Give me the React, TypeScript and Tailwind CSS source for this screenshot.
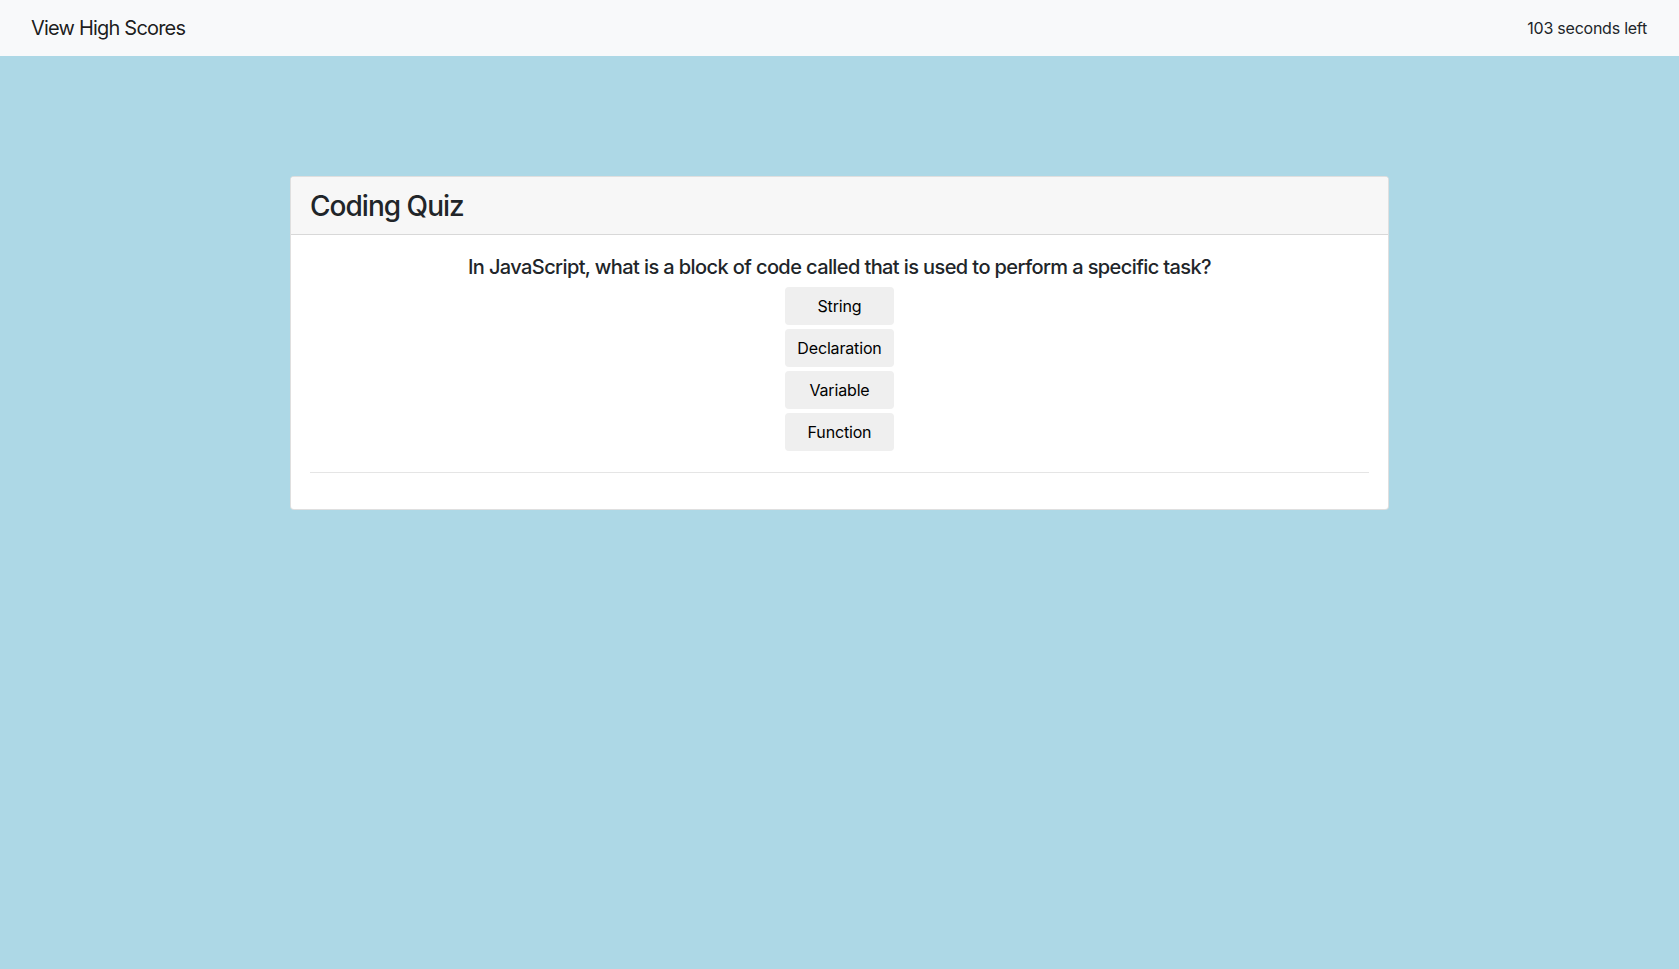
import React from "react";

export default function App() {
  const answers = ["String", "Declaration", "Variable", "Function"];
  return (
    <div
      className="min-h-[969px] w-full bg-[#add8e6] text-[#212529]"
      style={{ fontFamily: "Inter, 'Noto Sans', 'Liberation Sans', sans-serif" }}
    >
      <nav className="flex h-[56px] items-center justify-between bg-[#f8f9fa] pl-[31px] pr-[32px]">
        <span className="text-[20px] leading-[30px] tracking-[-0.04em] text-black/90">View High Scores</span>
        <span className="text-[16px] leading-[24px] tracking-[-0.015em] text-[#212529]">103 seconds left</span>
      </nav>

      <div className="flex justify-center pt-[120px]">
        <div className="w-[1099px] overflow-hidden rounded-[4px] border border-black/[0.125] bg-white">
          <div className="border-b border-black/[0.125] bg-[#f7f7f7] px-[19px] pb-[11px] pt-[13px]">
            <h3 className="text-[28px] font-medium leading-[33px] tracking-[-0.035em]">Coding Quiz</h3>
          </div>
          <div className="px-[19px] pb-[20px] pt-[20px]">
            <h5 className="mb-[8px] text-center text-[20px] font-medium leading-[24px] tracking-[-0.03em]">
              In JavaScript, what is a block of code called that is used to perform a specific task?
            </h5>
            <div className="flex justify-center">
              <div className="mb-[5px] inline-flex flex-col gap-[4px]">
                {answers.map((a) => (
                  <button
                    key={a}
                    className="h-[38px] rounded-[4px] bg-[#efefef] px-[12px] text-[16px] leading-[24px] tracking-[-0.01em] text-black"
                  >
                    {a}
                  </button>
                ))}
              </div>
            </div>
            <hr className="mb-[16px] mt-[16px] border-t border-black/10" />
          </div>
        </div>
      </div>
    </div>
  );
}
